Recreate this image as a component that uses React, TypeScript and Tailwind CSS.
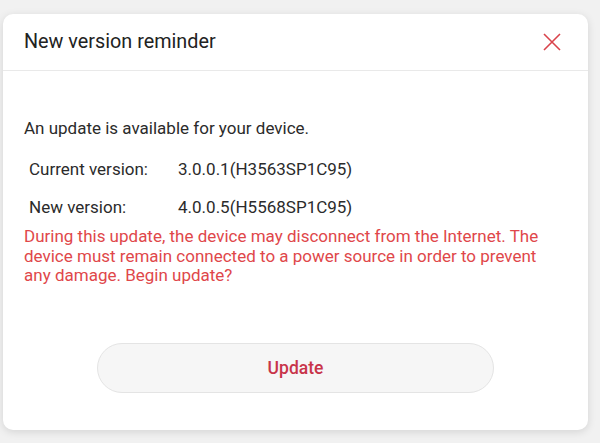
export default function App() {
  return (
    <div className="w-[600px] h-[443px] bg-[#f1f1f1] pt-[14px] pl-[3px] overflow-hidden" style={{ fontFamily: 'Roboto, "Noto Sans", sans-serif' }}>
      <div className="w-[585px] h-[416px] bg-white rounded-[10px] shadow-[0_2px_8px_rgba(0,0,0,0.12)] flex flex-col">
        {/* Header */}
        <div className="h-[57px] flex items-center justify-between pl-[21px] pr-[27px] border-b border-[#e9e9e9]">
          <h1 className="text-[19.8px] text-[#222]">New version reminder</h1>
          <button className="w-[18px] h-[18px] text-[#d9434b]">
            <svg viewBox="0 0 18 18" className="w-[18px] h-[18px]" fill="none" stroke="currentColor" strokeWidth="1.6">
              <path d="M1 1L17 17M17 1L1 17" />
            </svg>
          </button>
        </div>

        {/* Body */}
        <div className="px-[21px] pt-[47px] text-[17px] leading-[20px] text-[#2b2b2b]">
          <p>An update is available for your device.</p>
          <div className="mt-[21px] pl-[5px] flex flex-col gap-[18px]">
            <div className="flex">
              <span className="w-[149px]">Current version:</span>
              <span>3.0.0.1(H3563SP1C95)</span>
            </div>
            <div className="flex">
              <span className="w-[149px]">New version:</span>
              <span>4.0.0.5(H5568SP1C95)</span>
            </div>
          </div>
          <p className="mt-[10px] pr-[6px] text-[#e0474a] leading-[19.5px]">
            During this update, the device may disconnect from the Internet. The device must remain connected to a power source in order to prevent any damage. Begin update?
          </p>
        </div>

        {/* Footer */}
        <div className="flex justify-center mt-auto mb-[37px]">
          <button className="w-[397px] h-[50px] rounded-full bg-[#f6f6f6] border border-[#e4e4e4] text-[17.5px] font-medium text-[#c8344a]">
            Update
          </button>
        </div>
      </div>
    </div>
  );
}
